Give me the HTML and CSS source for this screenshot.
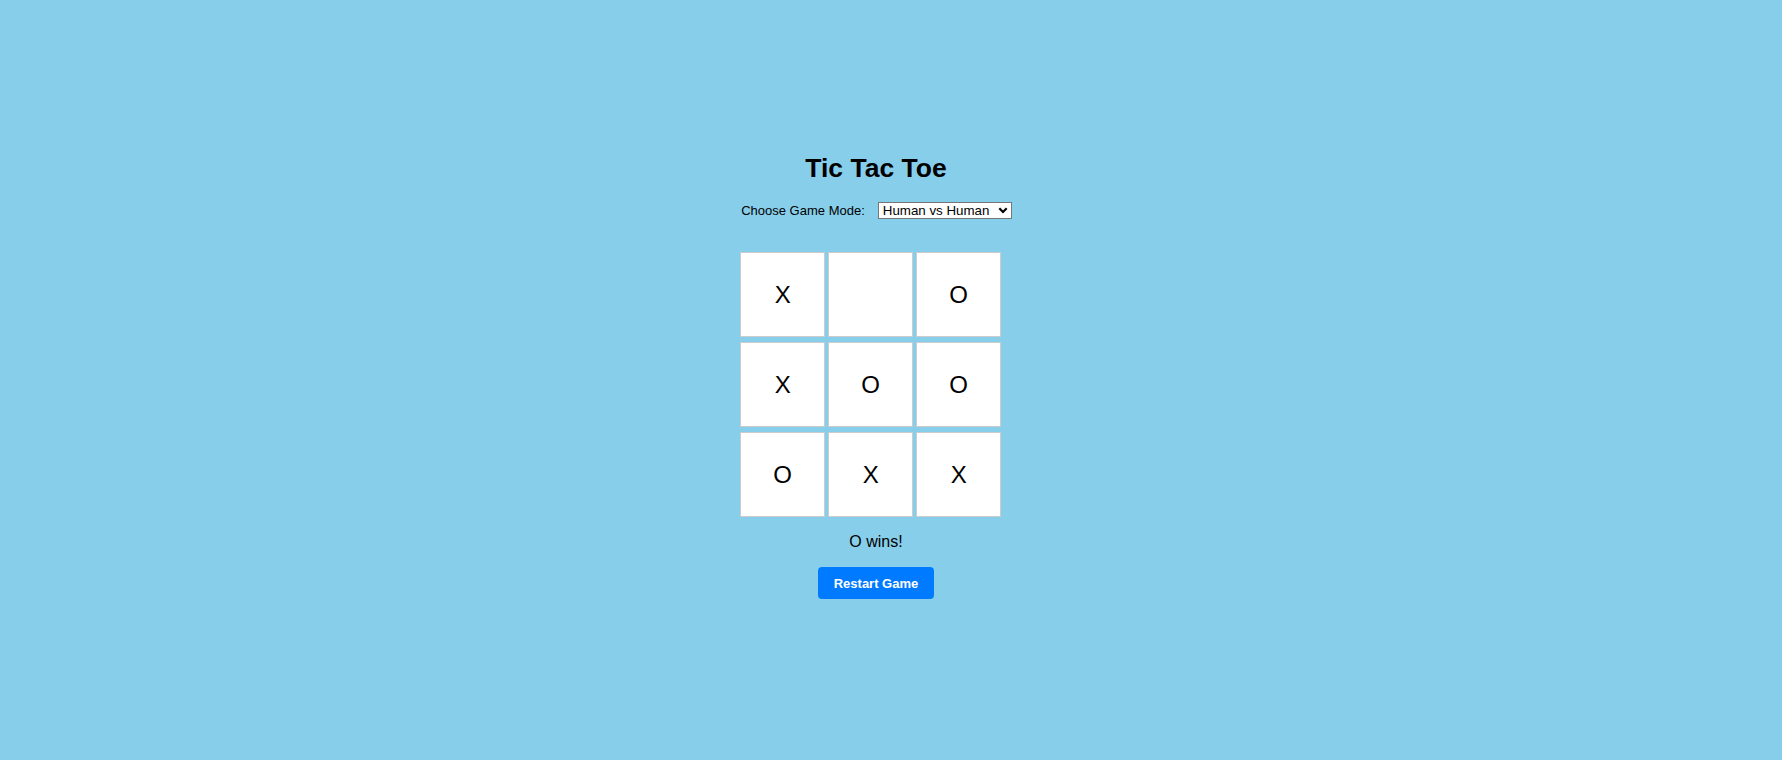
FILE: index.html
```html
<!DOCTYPE html>
<html lang="en">
<head>
<meta charset="utf-8">
<title>Tic Tac Toe</title>
<link rel="stylesheet" href="styles.css">
</head>
<body>
<div class="page">
  <div class="game">
    <h1 class="title">Tic Tac Toe</h1>
    <div class="mode-row">
      <label class="mode-label" for="mode">Choose Game Mode:</label>
      <span class="select-wrap">
        <select id="mode" class="mode-select">
          <option>Human vs Human</option>
          <option>Human vs AI</option>
        </select>
        <svg class="chevron" width="10" height="7" viewBox="0 0 10 7"><path d="M1.3 1.3 L5 5 L8.7 1.3" fill="none" stroke="#000" stroke-width="2.2"/></svg>
      </span>
    </div>
    <div class="board">
      <div class="cell">X</div>
      <div class="cell"></div>
      <div class="cell">O</div>
      <div class="cell">X</div>
      <div class="cell">O</div>
      <div class="cell">O</div>
      <div class="cell">O</div>
      <div class="cell">X</div>
      <div class="cell">X</div>
    </div>
    <div class="status">O wins!</div>
    <div class="actions">
      <button class="restart">Restart Game</button>
    </div>
  </div>
</div>
</body>
</html>
```

FILE: styles.css
```css
html, body {
  margin: 0;
  padding: 0;
}
body {
  background: #87ceeb;
  font-family: "Liberation Sans", Arial, sans-serif;
  color: #000;
  height: 760px;
}
.page {
  display: flex;
  justify-content: center;
  padding-right: 30px;
  padding-top: 153px;
}
.game {
  display: flex;
  flex-direction: column;
}
.title {
  margin: 0;
  font-size: 26.5px;
  line-height: 30px;
  font-weight: bold;
  text-align: center;
}
.mode-row {
  display: flex;
  align-items: center;
  margin-top: 19px;
  height: 17px;
}
.mode-label {
  font-size: 13px;
  line-height: 15px;
  margin-left: 1px;
  margin-right: 13px;
}
.select-wrap {
  position: relative;
  display: inline-block;
  height: 17px;
}
.mode-select {
  appearance: none;
  -webkit-appearance: none;
  box-sizing: border-box;
  width: 134px;
  height: 17px;
  margin: 0;
  padding: 0 0 0 4px;
  border: 1px solid #767676;
  border-radius: 0;
  background: #fff;
  font-family: "Liberation Sans", Arial, sans-serif;
  font-size: 13.33px;
  line-height: 15px;
  color: #000;
  display: block;
}
.chevron {
  position: absolute;
  right: 4px;
  top: 5px;
  pointer-events: none;
}
.board {
  margin-top: 33px;
  display: grid;
  grid-template-columns: repeat(3, 85px);
  grid-auto-rows: 85px;
  column-gap: 3px;
  row-gap: 5px;
}
.cell {
  box-sizing: border-box;
  background: #fff;
  border: 1px solid #ccc;
  display: flex;
  align-items: center;
  justify-content: center;
  font-size: 24px;
}
.status {
  margin-top: 16px;
  font-size: 16px;
  line-height: 18px;
  text-align: center;
}
.actions {
  display: flex;
  justify-content: center;
  margin-top: 16px;
}
.restart {
  box-sizing: border-box;
  height: 32px;
  width: 116px;
  padding: 0;
  white-space: nowrap;
  border: none;
  border-radius: 4px;
  background: #007bff;
  color: #fff;
  font-family: "Liberation Sans", Arial, sans-serif;
  font-size: 13px;
  font-weight: bold;
  cursor: pointer;
}
```
